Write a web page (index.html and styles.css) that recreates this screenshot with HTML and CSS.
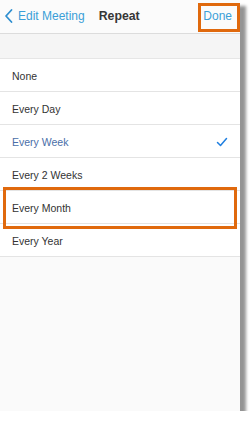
FILE: index.html
```html
<!DOCTYPE html>
<html>
<head>
<meta charset="utf-8">
<link rel="stylesheet" href="styles.css">
</head>
<body>
<div class="screen">
  <header class="nav">
    <div class="back">
      <svg class="chev" width="10" height="16" viewBox="0 0 10 16"><polyline points="7.5,2 2,8 7.5,14" fill="none" stroke="#2f8fd0" stroke-width="1.8" stroke-linecap="round" stroke-linejoin="round"/></svg>
      <span>Edit Meeting</span>
    </div>
    <div class="title">Repeat</div>
    <div class="done">Done</div>
  </header>
  <div class="band"></div>
  <ul class="list">
    <li class="row">None</li>
    <li class="row">Every Day</li>
    <li class="row selected"><span>Every Week</span>
      <svg class="check" width="12" height="10" viewBox="0 0 12 10"><polyline points="1.5,5.5 4.5,8.5 10.5,1.5" fill="none" stroke="#1f7fe0" stroke-width="1.5" stroke-linecap="round" stroke-linejoin="round"/></svg>
    </li>
    <li class="row">Every 2 Weeks</li>
    <li class="row">Every Month</li>
    <li class="row">Every Year</li>
  </ul>
  <div class="mark mark-done"></div>
  <div class="mark mark-month"></div>
</div>
</body>
</html>
```
FILE: styles.css
```css
* { box-sizing: border-box; }
html, body { margin: 0; padding: 0; background: #ffffff; }
body { font-family: "Liberation Sans", Arial, sans-serif; }
.screen {
  position: relative;
  width: 240px;
  height: 411px;
  background: #fafafa;
  box-shadow: 6px 6px 3px rgba(0,0,0,0.42);
}
.nav {
  height: 34px;
  background: #fbfbfb;
  border-bottom: 1px solid #dcdcdc;
  display: flex;
  align-items: center;
  padding: 0 0 1px 4px;
}
.back {
  display: flex;
  align-items: center;
  color: #3b9fd8;
  font-size: 12px;
  gap: 4px;
}
.chev { display: block; margin-top: -1px; }
.title {
  margin-left: 14px;
  font-size: 12.3px;
  font-weight: bold;
  color: #363636;
}
.done {
  margin-left: auto;
  margin-right: 8px;
  color: #3b9fd8;
  font-size: 12px;
}
.band {
  height: 25px;
  background: #f5f5f5;
  border-bottom: 1px solid #e6e6e6;
}
.list { list-style: none; margin: 0; padding: 0; background: #ffffff; }
.row {
  height: 33px;
  display: flex;
  align-items: center;
  justify-content: space-between;
  padding: 1px 12px 0 12px;
  font-size: 10.5px;
  color: #333333;
  border-bottom: 1px solid #e4e4e4;
}
.row.selected { color: #4a6ea8; }
.check { display: block; margin-right: 0; }
.mark {
  position: absolute;
  border: 3px solid #e0690d;
}
.mark-done { left: 198px; top: 3px; width: 42px; height: 29px; }
.mark-month { left: 3px; top: 187px; width: 234px; height: 42px; }
```
